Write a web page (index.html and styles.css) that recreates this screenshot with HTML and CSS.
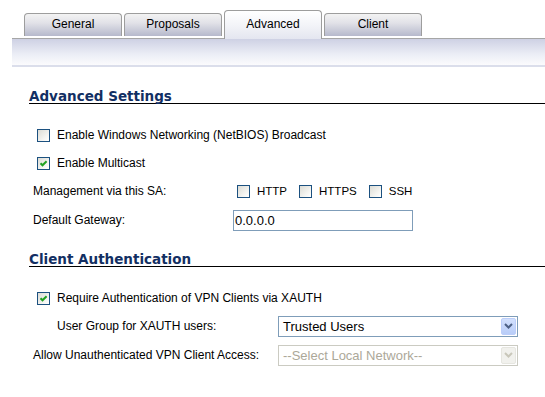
FILE: index.html
```html
<!DOCTYPE html>
<html>
<head>
<meta charset="utf-8">
<link rel="stylesheet" href="styles.css">
</head>
<body>
<div class="tabs">
  <div class="tab">General</div>
  <div class="tab">Proposals</div>
  <div class="tab active">Advanced</div>
  <div class="tab">Client</div>
</div>
<div class="band"></div>

<h2 class="head head-first">Advanced Settings</h2>
<div class="row chk-row"><span class="cb"></span><span>Enable Windows Networking (NetBIOS) Broadcast</span></div>
<div class="row chk-row"><span class="cb"><svg viewBox="0 0 11 11" width="11" height="11"><polyline points="2.5,5.3 4.5,7.3 8.6,3.2" fill="none" stroke="#21a121" stroke-width="2"/></svg></span><span>Enable Multicast</span></div>
<div class="row field"><span class="lbl">Management via this SA:</span>
  <span class="opts">
    <span class="opt"><span class="cb"></span><span>HTTP</span></span>
    <span class="opt"><span class="cb"></span><span>HTTPS</span></span>
    <span class="opt"><span class="cb"></span><span>SSH</span></span>
  </span>
</div>
<div class="row field row-tall"><span class="lbl">Default Gateway:</span><span class="input">0.0.0.0</span></div>

<h2 class="head">Client Authentication</h2>
<div class="row chk-row"><span class="cb"><svg viewBox="0 0 11 11" width="11" height="11"><polyline points="2.5,5.3 4.5,7.3 8.6,3.2" fill="none" stroke="#21a121" stroke-width="2"/></svg></span><span>Require Authentication of VPN Clients via XAUTH</span></div>
<div class="row field field-wide"><span class="lbl lbl-indent">User Group for XAUTH users:</span>
  <div class="select"><span class="sel-text">Trusted Users</span><span class="sel-btn"><svg viewBox="0 0 9 6" width="9" height="6"><polyline points="1,1 4.5,4.5 8,1" fill="none" stroke="#4d6185" stroke-width="2"/></svg></span></div>
</div>
<div class="row field field-wide row-tall"><span class="lbl">Allow Unauthenticated VPN Client Access:</span>
  <div class="select disabled"><span class="sel-text">--Select Local Network--</span><span class="sel-btn"><svg viewBox="0 0 9 6" width="9" height="6"><polyline points="1,1 4.5,4.5 8,1" fill="none" stroke="#c9c7ba" stroke-width="2"/></svg></span></div>
</div>
</body>
</html>
```
FILE: styles.css
```css
body {
  margin: 0;
  width: 545px;
  background: #fff;
  color: #000;
  font-family: "Liberation Sans", Arial, sans-serif;
  font-size: 12px;
}

.tabs {
  display: flex;
  align-items: flex-start;
  gap: 2px;
  height: 28px;
  padding: 10px 0 0 24px;
}

.tab {
  box-sizing: border-box;
  width: 98px;
  height: 23px;
  margin-top: 3px;
  padding-top: 0;
  border: 1px solid #9d9d9d;
  border-bottom: none;
  border-radius: 4px 4px 0 0;
  background: linear-gradient(#f3f3f3, #e2e2e8 40%, #b6b9cc);
  text-align: center;
  line-height: 20px;
}

.tab.active {
  position: relative;
  z-index: 1;
  height: 29px;
  margin-top: 0;
  padding-top: 3px;
  background: linear-gradient(#ffffff, #f3f4f8 50%, #e4e6f0);
}

.band {
  margin-left: 12px;
  height: 26px;
  border-top: 1px solid #a6a6a6;
  border-bottom: 2px solid #dbdeeb;
  background: linear-gradient(#ced1e4, #eceef6 60%, #fbfbfd);
}

.head {
  margin: 17px 0 17px 29px;
  padding: 0;
  font-family: "DejaVu Sans", Verdana, sans-serif;
  font-weight: bold;
  font-size: 13.5px;
  line-height: 14px;
  color: #122f63;
  border-bottom: 1px solid #000;
}

.head-first {
  margin-top: 22px;
}

.row {
  display: flex;
  align-items: center;
  height: 28px;
}

.row-tall {
  height: 30px;
}

.chk-row {
  padding-left: 37px;
  gap: 7px;
}

.cb {
  box-sizing: border-box;
  width: 13px;
  height: 13px;
  flex: none;
  border: 1px solid #1c5180;
  background: linear-gradient(135deg, #dcdcd5, #f6f6f3 70%, #ffffff);
  display: flex;
  align-items: center;
  justify-content: center;
}

.field {
  padding-left: 33px;
}

.lbl {
  box-sizing: border-box;
  width: 200px;
  flex: none;
}

.field-wide .lbl {
  width: 245px;
}

.lbl-indent {
  padding-left: 24px;
}

.opts {
  display: flex;
  align-items: center;
  gap: 12px;
  margin-left: 4px;
  font-size: 11.5px;
}

.opt {
  display: flex;
  align-items: center;
  gap: 7px;
}

.input {
  box-sizing: border-box;
  width: 180px;
  height: 21px;
  border: 1px solid #7f9db9;
  padding-left: 1px;
  font-size: 13px;
  line-height: 19px;
}

.select {
  box-sizing: border-box;
  display: flex;
  align-items: center;
  width: 240px;
  height: 21px;
  border: 1px solid #7f9db9;
  background: #fff;
  font-size: 13px;
}

.sel-text {
  flex: 1;
  padding-left: 4px;
}

.sel-btn {
  box-sizing: border-box;
  width: 15px;
  height: 17px;
  margin-right: 1px;
  border: 1px solid #bccefa;
  border-radius: 2px;
  background: linear-gradient(#d2e0fd, #b9cdf8);
  display: flex;
  align-items: center;
  justify-content: center;
}

.select.disabled {
  border-color: #cbcbc2;
  color: #aca899;
}

.select.disabled .sel-btn {
  border-color: #e6e6e0;
  background: #f1f1ed;
}
```
